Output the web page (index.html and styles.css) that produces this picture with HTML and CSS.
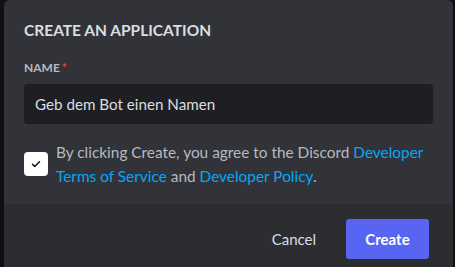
FILE: index.html
```html
<!DOCTYPE html>
<html lang="en">
<head>
    <meta charset="UTF-8">
    <title>Create an Application</title>
    <link rel="stylesheet" href="styles.css">
</head>
<body>

<div class="modal">
    <div class="modal-body">
        <h2 class="modal-title">Create an Application</h2>

        <label class="field-label" for="appName">Name<span class="required">*</span></label>
        <input class="text-input" id="appName" type="text" value="Geb dem Bot einen Namen">

        <div class="agree-row">
            <span class="checkbox">
                <svg width="12" height="12" viewBox="0 0 24 24">
                    <path d="M5 12.5l4.5 4.5L19 7.5" fill="none" stroke="#111" stroke-width="3" stroke-linecap="round" stroke-linejoin="round"/>
                </svg>
            </span>
            <p class="agree-text">
                By clicking Create, you agree to the Discord <a href="#">Developer Terms of Service</a> and <a href="#">Developer Policy</a>.
            </p>
        </div>
    </div>

    <div class="modal-footer">
        <button class="btn-link">Cancel</button>
        <button class="btn-primary">Create</button>
    </div>
</div>

</body>
</html>
```

FILE: styles.css
```css
body {
    margin: 0;
    padding: 0;
    background-color: #0f1012;
    font-family: 'Lato', sans-serif;
    height: 267px;
    overflow: hidden;
}

.modal {
    margin-left: 4px;
    width: 449px;
    background-color: #313338;
    border-radius: 6px 6px 0 0;
    overflow: hidden;
}

.modal-body {
    padding: 20px 20px 16px 20px;
}

.modal-title {
    margin: 0 0 20px;
    font-size: 15.5px;
    font-weight: bold;
    text-transform: uppercase;
    color: #dbdee1;
    line-height: 20px;
}

.field-label {
    display: block;
    font-size: 12px;
    font-weight: bold;
    text-transform: uppercase;
    color: #b5bac1;
    line-height: 16px;
    margin-bottom: 8px;
}

.required {
    color: #f23f42;
    margin-left: 2px;
}

.text-input {
    box-sizing: border-box;
    display: block;
    width: 409px;
    height: 40px;
    padding: 0 10px;
    border: 1px solid #1e1f22;
    border-radius: 3px;
    background-color: #1e1f22;
    color: #dbdee1;
    font-family: 'Lato', sans-serif;
    font-size: 15.2px;
    outline: none;
}

.agree-row {
    display: flex;
    align-items: center;
    gap: 8px;
    margin-top: 16px;
}

.checkbox {
    flex: none;
    width: 24px;
    height: 24px;
    border-radius: 4px;
    background-color: #fff;
    display: flex;
    align-items: center;
    justify-content: center;
}

.agree-text {
    margin: 0;
    font-size: 15.4px;
    line-height: 24px;
    color: #b5bac1;
}

.agree-text a {
    color: #00a8fc;
    text-decoration: none;
}

.modal-footer {
    background-color: #2b2d31;
    padding: 15px 24px 16px 20px;
    display: flex;
    justify-content: flex-end;
    align-items: center;
    gap: 14px;
}

button {
    font-family: 'Lato', sans-serif;
    font-size: 15px;
    border: none;
    cursor: pointer;
    height: 40px;
    border-radius: 3px;
}

.btn-link {
    background: none;
    color: #dbdee1;
    padding: 0 16px;
}

.btn-primary {
    background-color: #5865f2;
    color: #fff;
    width: 83px;
    font-weight: bold;
}
```
